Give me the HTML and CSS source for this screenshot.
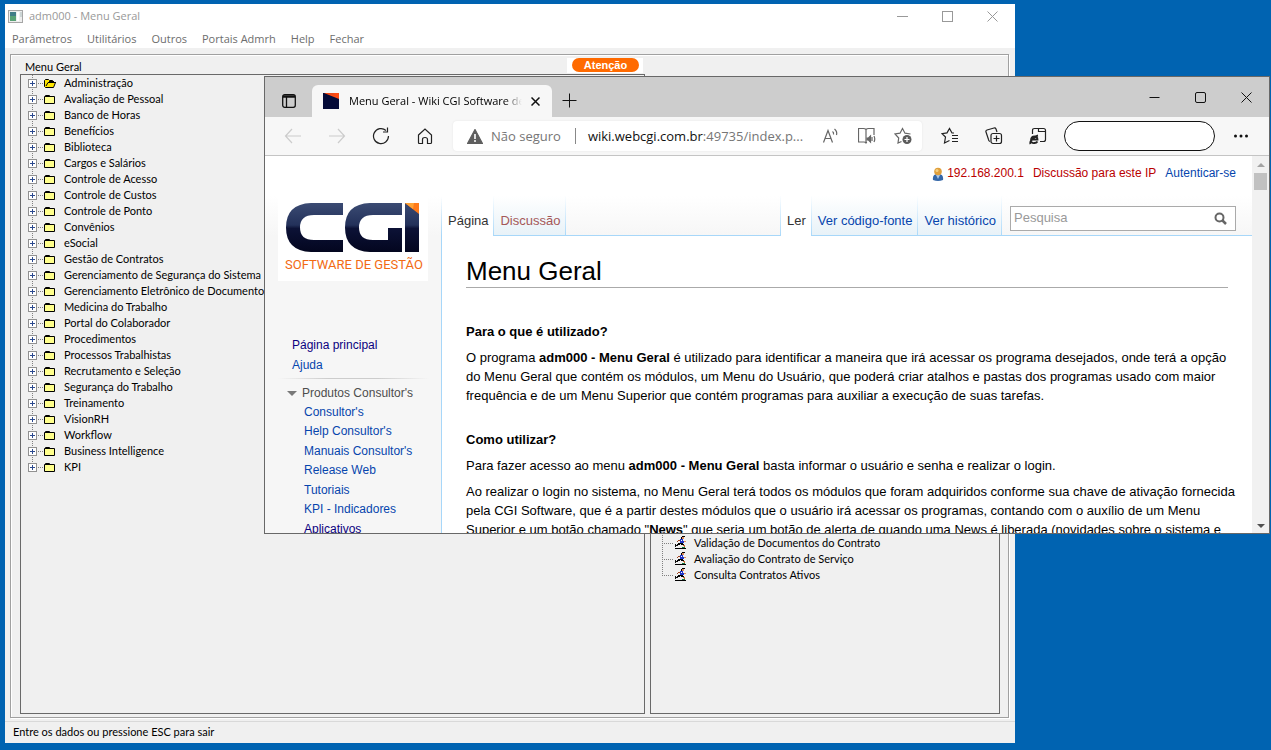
FILE: index.html
```html
<!DOCTYPE html>
<html lang="pt-BR">
<head>
<meta charset="utf-8">
<title>adm000 - Menu Geral</title>
<link rel="stylesheet" href="styles.css">
</head>
<body>
<svg class="defs" aria-hidden="true">
  <defs>
    <linearGradient id="navy" x1="0" y1="0" x2="0" y2="1"><stop offset="0" stop-color="#3b4b73"/><stop offset=".45" stop-color="#23315a"/><stop offset=".52" stop-color="#0c1236"/><stop offset="1" stop-color="#03061f"/></linearGradient>
    <symbol id="plus" viewBox="0 0 9 9"><rect x=".5" y=".5" width="8" height="8" fill="#fff" stroke="#919191"/><path d="M2 4.500h5M4.500 2v5" stroke="#2b4a8f"/></symbol>
    <symbol id="folder" viewBox="0 0 13 12"><path d="M.5 10.500v-7h1v-1h4v1h5v7z" fill="#ffff8c" stroke="#000"/><path d="M1 3.500h9" stroke="#000"/></symbol>
    <symbol id="open" viewBox="0 0 13 12"><path d="M.5 9.500v-6l1-1h3l1 1h3l1 2h2L9.500 10.500h-8z" fill="#ffe600" stroke="#000"/><path d="M2 9l2-3.500h8M5 4.500h5" stroke="#000" fill="none"/></symbol>
    <symbol id="runner" viewBox="0 0 13 14"><path d="M1 12h11v1H1z" fill="#000"/><path d="M8 0h3v1H8zM7 1h1v2H7z" fill="#000"/><path d="M8 1h2v2H8z" fill="#e08a5a"/><path d="M6 3h3v2h1v2H6z" fill="#1f35c8"/><path d="M4 4h2v1H4zM3 5h1v1H3z" fill="#a0451f"/><path d="M7 4h1v1H7z" fill="#fff"/><path d="M10 5h2v1h-2z" fill="#e08a5a"/><path d="M4 7h5v1H4zM3 8h3v1H3zM7 8h3v1H7z" fill="#000"/><path d="M9 9h2v1H9zM10 10h1v2h-1z" fill="#c8692c"/><path d="M2 9h2v1H2zM1 8h1v3H1z" fill="#111"/><path d="M8 11h3v1H8z" fill="#147a3c"/></symbol>
  </defs>
</svg>
<main class="desktop">
  <section class="app" aria-label="adm000">
    <header class="app-title">
      <svg class="app-icon" viewBox="0 0 15 13"><rect x=".5" y=".5" width="14" height="12" fill="#eee" stroke="#a6a6a6"/><rect x="2" y="2" width="6" height="9" fill="#417d87"/><path d="M2 6h6v5H2z" fill="#59a276"/><rect x="9" y="2" width="2" height="9" fill="#fff"/><rect x="12" y="2" width="2" height="5" fill="#ccd5d5"/></svg>
      <span class="app-name">adm000 - Menu Geral</span>
      <div class="app-controls">
        <button aria-label="Minimizar"><svg viewBox="0 0 11 11"><path d="M0 5.500h11"/></svg></button>
        <button aria-label="Maximizar"><svg viewBox="0 0 11 11"><rect x=".5" y=".5" width="10" height="10"/></svg></button>
        <button aria-label="Fechar janela"><svg viewBox="0 0 11 11"><path d="M.5.500l10 10M10.500.500l-10 10"/></svg></button>
      </div>
    </header>
    <nav class="app-menu"><button>Parâmetros</button><button>Utilitários</button><button>Outros</button><button>Portais Admrh</button><button>Help</button><button>Fechar</button></nav>
    <div class="frame">
      <div class="left-col">
        <div class="caption"><span>Menu Geral</span><div class="notice"><button>Atenção</button></div></div>
        <ul class="panel tree">
          <li><svg class="exp"><use href="#plus"/></svg><svg class="fold"><use href="#open"/></svg>Administração</li>
          <li><svg class="exp"><use href="#plus"/></svg><svg class="fold"><use href="#folder"/></svg>Avaliação de Pessoal</li>
          <li><svg class="exp"><use href="#plus"/></svg><svg class="fold"><use href="#folder"/></svg>Banco de Horas</li>
          <li><svg class="exp"><use href="#plus"/></svg><svg class="fold"><use href="#folder"/></svg>Benefícios</li>
          <li><svg class="exp"><use href="#plus"/></svg><svg class="fold"><use href="#folder"/></svg>Biblioteca</li>
          <li><svg class="exp"><use href="#plus"/></svg><svg class="fold"><use href="#folder"/></svg>Cargos e Salários</li>
          <li><svg class="exp"><use href="#plus"/></svg><svg class="fold"><use href="#folder"/></svg>Controle de Acesso</li>
          <li><svg class="exp"><use href="#plus"/></svg><svg class="fold"><use href="#folder"/></svg>Controle de Custos</li>
          <li><svg class="exp"><use href="#plus"/></svg><svg class="fold"><use href="#folder"/></svg>Controle de Ponto</li>
          <li><svg class="exp"><use href="#plus"/></svg><svg class="fold"><use href="#folder"/></svg>Convênios</li>
          <li><svg class="exp"><use href="#plus"/></svg><svg class="fold"><use href="#folder"/></svg>eSocial</li>
          <li><svg class="exp"><use href="#plus"/></svg><svg class="fold"><use href="#folder"/></svg>Gestão de Contratos</li>
          <li><svg class="exp"><use href="#plus"/></svg><svg class="fold"><use href="#folder"/></svg>Gerenciamento de Segurança do Sistema</li>
          <li><svg class="exp"><use href="#plus"/></svg><svg class="fold"><use href="#folder"/></svg>Gerenciamento Eletrônico de Documentos</li>
          <li><svg class="exp"><use href="#plus"/></svg><svg class="fold"><use href="#folder"/></svg>Medicina do Trabalho</li>
          <li><svg class="exp"><use href="#plus"/></svg><svg class="fold"><use href="#folder"/></svg>Portal do Colaborador</li>
          <li><svg class="exp"><use href="#plus"/></svg><svg class="fold"><use href="#folder"/></svg>Procedimentos</li>
          <li><svg class="exp"><use href="#plus"/></svg><svg class="fold"><use href="#folder"/></svg>Processos Trabalhistas</li>
          <li><svg class="exp"><use href="#plus"/></svg><svg class="fold"><use href="#folder"/></svg>Recrutamento e Seleção</li>
          <li><svg class="exp"><use href="#plus"/></svg><svg class="fold"><use href="#folder"/></svg>Segurança do Trabalho</li>
          <li><svg class="exp"><use href="#plus"/></svg><svg class="fold"><use href="#folder"/></svg>Treinamento</li>
          <li><svg class="exp"><use href="#plus"/></svg><svg class="fold"><use href="#folder"/></svg>VisionRH</li>
          <li><svg class="exp"><use href="#plus"/></svg><svg class="fold"><use href="#folder"/></svg>Workflow</li>
          <li><svg class="exp"><use href="#plus"/></svg><svg class="fold"><use href="#folder"/></svg>Business Intelligence</li>
          <li><svg class="exp"><use href="#plus"/></svg><svg class="fold"><use href="#folder"/></svg>KPI</li>
        </ul>
      </div>
      <ul class="panel programs">
        <li><svg><use href="#runner"/></svg>Validação de Documentos do Contrato</li>
        <li><svg><use href="#runner"/></svg>Avaliação do Contrato de Serviço</li>
        <li><svg><use href="#runner"/></svg>Consulta Contratos Ativos</li>
      </ul>
    </div>
    <footer class="status">Entre os dados ou pressione ESC para sair</footer>
  </section>

  <section class="browser" aria-label="Navegador">
    <header class="tabstrip">
      <button class="tab-actions" aria-label="Menu de guias"><svg viewBox="0 0 14 14"><rect x=".7" y=".7" width="12.600" height="12.600" rx="2"/><path d="M1 2.500h12" stroke-width="2.500"/><path d="M4.500 3v10"/></svg></button>
      <div class="tab">
        <svg class="favicon" viewBox="0 0 16 16"><rect width="16" height="16" fill="#050b38"/><path d="M1 0h15v6z" fill="#ff4b12"/><path d="M3 0h7l3 3z" fill="#e84a1c"/></svg>
        <span class="tab-title">Menu Geral - Wiki CGI Software de Gestão</span>
        <button class="tab-close" aria-label="Fechar guia"><svg viewBox="0 0 9 9"><path d="M.5.500l8 8M8.500.500l-8 8"/></svg></button>
      </div>
      <button class="new-tab" aria-label="Nova guia"><svg viewBox="0 0 15 15"><path d="M7.500.500v14M.5 7.500h14"/></svg></button>
      <div class="win-controls">
        <button aria-label="Minimizar"><svg viewBox="0 0 11 11"><path d="M.5 5.500h10"/></svg></button>
        <button aria-label="Maximizar"><svg viewBox="0 0 11 11"><rect x=".5" y=".5" width="10" height="10" rx="1.500"/></svg></button>
        <button aria-label="Fechar"><svg viewBox="0 0 11 11"><path d="M.5.500l10 10M10.500.500l-10 10"/></svg></button>
      </div>
    </header>
    <div class="toolbar">
      <div class="nav-buttons">
        <button class="off" aria-label="Voltar"><svg viewBox="0 0 18 18"><path d="M17 9H1.500M8 2L1.500 9 8 16"/></svg></button>
        <button class="off" aria-label="Avançar"><svg viewBox="0 0 18 18"><path d="M1 9h15.500M10 2l6.500 7-6.500 7"/></svg></button>
        <button aria-label="Atualizar"><svg viewBox="0 0 18 18"><path d="M16.500 9A7.500 7.500 0 1 1 14 3.500M15.500.500v4.500H11"/></svg></button>
        <button aria-label="Início"><svg viewBox="0 0 18 18"><path d="M2.500 8L9 2l6.500 6v7.500q0 1-1 1H11.500v-4q0-2-2.500-2t-2.500 2v4h-3q-1 0-1-1z"/></svg></button>
      </div>
      <div class="address">
        <svg class="warn" viewBox="0 0 16 15"><path d="M8 .5L15.500 14.500H.5z" fill="#5e5e5e" stroke="#5e5e5e"/><path d="M8 5v5" stroke="#fff" stroke-width="1.600"/><circle cx="8" cy="12" r="1" fill="#fff" stroke="none"/></svg>
        <span class="unsafe">Não seguro</span>
        <span class="url"><b>wiki.webcgi.com.br</b>:49735/index.p...</span>
        <button aria-label="Ler em voz alta"><svg viewBox="0 0 18 18"><path d="M1.500 15.500L6 3.500l4.500 12M3 11.500h6M10.500 4.500q1.500 1 1 3M12.500 2q3 2.500 2 6"/></svg></button>
        <button aria-label="Leitor imersivo"><svg viewBox="0 0 18 18"><path d="M8 16v-13.500q-1-1-2.500-1H.5v13.500h5.500q1 0 2 1 .5-.5 1-.7M8 2.500q1-1 2.500-1h5.500V8"/><path d="M9 11h1.500l2-2v6l-2-2H9z" fill="#666"/><path d="M14 10v4M16 9q1.500 3 0 6"/></svg></button>
        <button aria-label="Adicionar aos favoritos"><svg viewBox="0 0 18 18"><path d="M7.500 14.500L4 16l.7-5L1 7l5-.8L8.500 1.500 11 6.200l5.500.8"/><circle cx="13" cy="12.500" r="4.500" fill="#5b5b5b" stroke="none"/><path d="M10.500 12.500h5M13 10v5" stroke="#fff"/></svg></button>
      </div>
      <div class="extras">
        <button aria-label="Favoritos"><svg viewBox="0 0 18 18"><path d="M8.500 13.500L3.500 16l1-6L1 6.700l5-.8L8.500 1.500 11 6h2M11 8.500h6M11 11.500h6M11 14.500h6"/></svg></button>
        <button aria-label="Coleções"><svg viewBox="0 0 18 18"><path d="M3.500 12.500L1 5q-.5-1.500 1-2l7-2q1.500-.3 2 1l1 3M5 14.500q-1.500-.5-1.500-2"/><rect x="6" y="6.500" width="10.500" height="10" rx="2"/><path d="M8.500 11.500h6M11.500 8.500v6"/></svg></button>
        <button aria-label="Modo Internet Explorer"><svg viewBox="0 0 18 18"><path d="M3.500 7V3.500q0-2 2-2h9q2 0 2 2v9q0 2-2 2H11M9.500 1.500v3h7"/><path d="M3 12.500h5.500q0-3-3-3-3.500 0-3.500 3.500t3.500 3q2 0 3-1.500M1.500 17q-1-2 2-5t5.500-3.500" stroke-width="1.800"/></svg></button>
        <button class="profile" aria-label="Perfil"></button>
        <button class="more" aria-label="Configurações e mais"><svg viewBox="0 0 14 4"><circle cx="1.500" cy="2" r="1.500"/><circle cx="7" cy="2" r="1.500"/><circle cx="12.500" cy="2" r="1.500"/></svg></button>
      </div>
    </div>
    <div class="viewport">
      <div class="wiki">
        <aside class="side">
          <a class="logo" href="#" aria-label="CGI Software de Gestão">
            <svg viewBox="0 0 134 49"><path d="M57 0H25Q0 1 0 24.500T25 49h32V37H28Q14 37 14 24.500T28 12h29z" fill="url(#navy)"/><path d="M116 0H84Q59 1 59 24.500T84 49h32V25h-14v12H87Q73 37 73 24.500T87 12h29z" fill="url(#navy)"/><path d="M119 0h14v49h-14z" fill="url(#navy)"/><path d="M119 0h14v11z" fill="#ff7a1a"/><path d="M119 0h9l-1 6z" fill="#ffa235"/></svg>
            <span>SOFTWARE DE GESTÃO</span>
          </a>
          <nav class="side-main"><a class="seen" href="#">Página principal</a><a href="#">Ajuda</a></nav>
          <nav class="side-products">
            <h3>Produtos Consultor's</h3>
            <a href="#">Consultor's</a><a href="#">Help Consultor's</a><a href="#">Manuais Consultor's</a><a href="#">Release Web</a><a href="#">Tutoriais</a><a href="#">KPI - Indicadores</a><a class="seen" href="#">Aplicativos</a>
          </nav>
        </aside>
        <div class="main">
          <header class="head">
            <nav class="personal">
              <svg viewBox="0 0 12 14"><path d="M1 13q-1-6 5-6t5 6q-5 2-10 0z" fill="#3467a8"/><path d="M4 8h4l-2 4z" fill="#a8c6e8"/><circle cx="6" cy="4.500" r="3.800" fill="#e0a03c"/><circle cx="5" cy="3.500" r="1.500" fill="#f5cf80"/></svg>
              <a class="new" href="#">192.168.200.1</a><a class="new" href="#">Discussão para este IP</a><a href="#">Autenticar-se</a>
            </nav>
            <div class="tabs">
              <a class="current" href="#">Página</a><a class="missing" href="#">Discussão</a>
              <span class="fill"></span>
              <a class="current" href="#">Ler</a><a href="#">Ver código-fonte</a><a href="#">Ver histórico</a>
              <form class="search"><input type="text" placeholder="Pesquisa" aria-label="Pesquisa"><button type="button" aria-label="Pesquisar"><svg viewBox="0 0 13 13"><circle cx="5.500" cy="5.500" r="4"/><path d="M8.500 8.500l3.500 3.500" stroke-width="2.500"/></svg></button></form>
            </div>
          </header>
          <article class="content">
            <h1>Menu Geral</h1>
            <h2>Para o que é utilizado?</h2>
            <p>O programa <b>adm000 - Menu Geral</b> é utilizado para identificar a maneira que irá acessar os programa desejados, onde terá a opção do Menu Geral que contém os módulos, um Menu do Usuário, que poderá criar atalhos e pastas dos programas usado com maior frequência e de um Menu Superior que contém programas para auxiliar a execução de suas tarefas.</p>
            <h2>Como utilizar?</h2>
            <p>Para fazer acesso ao menu <b>adm000 - Menu Geral</b> basta informar o usuário e senha e realizar o login.</p>
            <p>Ao realizar o login no sistema, no Menu Geral terá todos os módulos que foram adquiridos conforme sua chave de ativação fornecida pela CGI Software, que é a partir destes módulos que o usuário irá acessar os programas, contando com o auxílio de um Menu Superior e um botão chamado "<b>News</b>" que seria um botão de alerta de quando uma News é liberada (novidades sobre o sistema e</p>
          </article>
        </div>
      </div>
      <div class="scrollbar" aria-hidden="true">
        <svg viewBox="0 0 8 4"><path d="M0 4l4-4 4 4z" fill="#a3a3a3"/></svg>
        <span></span>
        <svg viewBox="0 0 8 4"><path d="M0 0l4 4 4-4z" fill="#505050"/></svg>
      </div>
    </div>
  </section>
</main>
</body>
</html>
```

FILE: styles.css
```css
* { box-sizing: border-box; }
body { margin: 0; }
button { border: 0; padding: 0; background: none; font: inherit; color: inherit; }
a { text-decoration: none; color: #0645ad; }
ul { list-style: none; margin: 0; padding: 0; }
svg { display: block; flex: none; fill: none; }
.defs { position: absolute; width: 0; height: 0; }
.desktop { position: relative; height: 100vh; overflow: hidden; background: #0063b1; }

/* ERP window */
.app { position: absolute; inset: 4px 256px 7px 5px; display: flex; flex-direction: column; background: #f0f0f0; font: 11px/16px Lato, sans-serif; color: #000; }
.app-title { display: flex; align-items: center; height: 24px; padding: 0 0 0 3px; background: #fff; font: 11px/16px "Open Sans", sans-serif; color: #999; }
.app-icon { width: 15px; height: 13px; }
.app-name { flex: 1; padding-left: 6px; }
.app-controls { display: flex; }
.app-controls button { width: 45px; display: grid; place-items: center; }
.app-controls svg { width: 11px; height: 11px; stroke: #999; }
.app-menu { display: flex; gap: 15px; height: 20px; padding: 1px 7px 0; background: #fff; font: 11px/20px "Open Sans", sans-serif; color: #6d6d6d; }
.frame { flex: 1; display: grid; grid-template-columns: 625fr 350fr; gap: 5px; margin: 6px 6px 3px 5px; padding: 0 8px 3px 9px; border: 1px solid #a0a0a0; box-shadow: 1px 1px #fff, inset 1px 1px #fff; min-height: 0; }
.left-col { display: flex; flex-direction: column; min-width: 0; }
.caption { display: flex; justify-content: space-between; height: 19px; padding: 3px 2px 0 5px; }
.caption span { padding-top: 1px; }
.notice { height: 15px; padding: 0 4px 0 5px; background: #fff; }
.notice button { display: block; width: 67px; height: 14px; border-radius: 7px; background: #ff6a00; color: #fff; font: bold 11px/14px "Liberation Sans", Arial, sans-serif; }
.panel { border: 1px solid #696969; }
.tree { flex: 1; }
.tree li { display: flex; align-items: center; height: 16px; padding-left: 7px; white-space: nowrap; background: repeating-linear-gradient(#808080 0 1px, transparent 1px 2px) 11px 0 / 1px 100% no-repeat, repeating-linear-gradient(90deg, #808080 0 1px, transparent 1px 2px) 17px 8px / 6px 1px no-repeat; }
.tree li:last-child { background-size: 1px 8px, 6px 1px; }
.exp { width: 9px; height: 9px; margin-right: 7px; }
.fold { width: 13px; height: 12px; margin-right: 7px; }
.programs { margin-top: 24px; padding-top: 455px; }
.programs li { display: flex; align-items: center; height: 16px; padding-left: 23px; background: repeating-linear-gradient(#808080 0 1px, transparent 1px 2px) 11px 0 / 1px 100% no-repeat, repeating-linear-gradient(90deg, #808080 0 1px, transparent 1px 2px) 11px 8px / 11px 1px no-repeat; }
.programs li:last-child { background-size: 1px 8px, 11px 1px; }
.programs svg { width: 13px; height: 14px; margin-right: 7px; }
.status { height: 22px; padding: 2px 8px; border-top: 1px solid #d9d9d9; }

/* Browser window */
.browser { position: absolute; inset: 76px 1px 216px 264px; display: flex; flex-direction: column; border: 1px solid #686868; background: #f7f7f7; color: #000; font-family: "Open Sans", sans-serif; }
.tabstrip { display: flex; align-items: center; height: 40px; padding-left: 17px; background: #cdcdcd; }
.tab-actions svg { width: 14px; height: 14px; margin-top: 8px; stroke: #111; stroke-width: 1.3px; }
.tab { display: flex; align-items: center; align-self: flex-end; width: 240px; height: 32px; margin-left: 16px; padding: 0 12px 0 11px; border-radius: 6px 6px 0 0; background: #f7f7f7; }
.favicon { width: 16px; height: 16px; }
.tab-title { flex: 1; margin: 0 9px 0 10px; overflow: hidden; white-space: nowrap; font-size: 11px; line-height: 18px; mask-image: linear-gradient(90deg, #000 90%, transparent); }
.tab-close svg { width: 9px; height: 9px; stroke: #111; stroke-width: 1.5px; }
.new-tab { margin-left: 10px; }
.new-tab svg { width: 15px; height: 15px; margin-top: 6px; stroke: #111; }
.win-controls { display: flex; margin-left: auto; }
.win-controls button { display: grid; place-items: center; width: 46px; }
.win-controls svg { width: 11px; height: 11px; stroke: #111; }
.toolbar { display: flex; align-items: center; height: 39px; border-bottom: 1px solid #c4c4c4; }
.toolbar svg { width: 18px; height: 18px; stroke: #222; stroke-width: 1.2px; }
.nav-buttons { display: flex; gap: 26px; padding: 0 19px; }
.nav-buttons .off svg { stroke: #ccc; }
.address { flex: 1; display: flex; align-items: center; height: 30px; padding: 0 10px 0 14px; border-radius: 4px; background: #fff; box-shadow: 0 0 2px #e2e2e2; white-space: nowrap; color: #767676; font-size: 13px; }
.address .warn { width: 16px; height: 15px; }
.unsafe { margin-left: 8px; padding-right: 14px; border-right: 1px solid #888; line-height: 16px; }
.url { flex: 1; padding-left: 12px; }
.url b { font-weight: 400; color: #111; }
.address button { margin-left: 18px; }
.address button svg { stroke: #666; }
.extras { display: flex; align-items: center; gap: 26px; padding: 0 21px 0 19px; }
.extras .profile { width: 151px; height: 30px; margin: 0 -7px 0 -9px; border: 1px solid #111; border-radius: 15px; background: #fff; }
.extras .more svg { width: 14px; height: 4px; fill: #111; stroke: none; }
.viewport { flex: 1; display: flex; min-height: 0; overflow: hidden; }
.wiki { flex: 1; display: grid; grid-template-columns: 177px 1fr; min-width: 0; font: 13px/19px "Liberation Sans", Arial, sans-serif; overflow: hidden; background: linear-gradient(#fff 40px, #f6f6f6 80px); }
.side { padding: 34px 13px 0; font-size: 12px; background: linear-gradient(transparent 40px, #a7d7f9 80px) right / 1px 100% no-repeat; }
.logo { display: block; width: 150px; height: 91px; padding: 13px 7px 0; background: #fff; color: #f26a12; }
.logo svg { width: 134px; height: 49px; margin-left: 1px; }
.logo span { display: block; margin-top: 5px; font: 13px/16px Roboto, sans-serif; white-space: nowrap; }
.side-main { display: grid; margin-top: 54px; padding: 0 14px 3px; line-height: 20px; }
.side-products { display: grid; grid-template-rows: 19px repeat(7, 1fr); height: 161px; padding: 6px 0 0 26px; background: linear-gradient(90deg, transparent, #ccc 33%, #ccc 66%, transparent) top / 100% 1px no-repeat; }
.side-products h3 { display: flex; align-items: center; gap: 5px; margin: 0 0 0 -17px; font: inherit; color: #4d4d4d; }
.side-products h3::before { content: ""; border: 5px solid transparent; border-top-color: #797979; border-bottom: 0; }
.side a.seen { color: #0b0080; }
.main { display: flex; flex-direction: column; min-width: 0; }
.head { height: 80px; flex: none; display: flex; flex-direction: column; justify-content: space-between; background: linear-gradient(#a7d7f9, #a7d7f9) bottom / 100% 1px no-repeat; }
.personal { display: flex; justify-content: flex-end; gap: 9px; padding: 8px 16px 0; font-size: 12px; }
.personal svg { width: 12px; height: 14px; margin: 3px -6px 0 0; }
.personal .new { color: #ba0000; }
.tabs { display: flex; height: 40px; }
.tabs a { padding: 15px 5px 0 6px; border-right: 1px solid; border-image: linear-gradient(#fff, #a7d7f9) 1; background: linear-gradient(#fff, #e8f2f8) top / 100% 39px no-repeat; white-space: nowrap; }
.tabs .current { color: #333; background: #fff; }
.tabs .missing { color: #a55858; }
.fill { flex: 1; border-right: 1px solid; border-image: linear-gradient(#fff, #a7d7f9) 1; }
.search { display: flex; width: 226px; height: 25px; margin: 10px 16px 0 8px; border: 1px solid #aaa; background: #fff; }
.search input { flex: 1; min-width: 0; border: 0; padding: 0 3px 2px; background: none; font: 13px "Liberation Sans", Arial, sans-serif; }
.search input::placeholder { color: #999; opacity: 1; }
.search button { padding: 0 8px; }
.search svg { width: 13px; height: 13px; stroke: #666; stroke-width: 2px; }
.content { flex: 1; padding: 19px 24px; background: #fff; }
.content h1 { margin: 0 0 34px; border-bottom: 1px solid #aaa; font-weight: 400; font-size: 26px; line-height: 32px; }
.content h2 { margin: 25px 0 7px; font-size: 13px; line-height: 19px; }
.content p { margin: 0 -10px 7px 0; }
.scrollbar { display: flex; flex-direction: column; align-items: center; width: 17px; padding: 7px 0 5px; background: #f1f1f1; }
.scrollbar svg { width: 8px; height: 4px; }
.scrollbar span { width: 13px; height: 17px; margin: 6px 0 auto; background: #c1c1c1; }
```
